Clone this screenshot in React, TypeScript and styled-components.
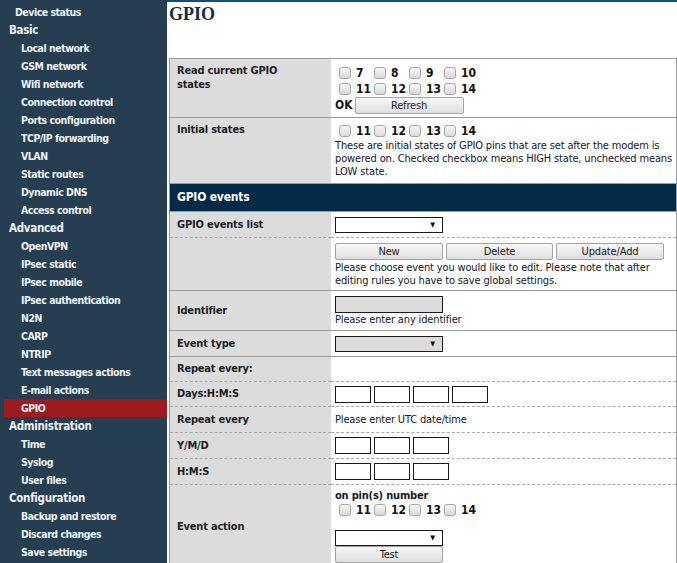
import React from 'react';
import styled, { createGlobalStyle } from 'styled-components';

const UI_FONT = `Tahoma, 'DejaVu Sans Condensed', 'DejaVu Sans', sans-serif`;

const GlobalStyle = createGlobalStyle`
  html, body {
    margin: 0;
    padding: 0;
    background: #ffffff;
    overflow: hidden;
  }
  body {
    font-family: ${UI_FONT};
    font-size: 11px;
    letter-spacing: -0.15px;
    color: #14162a;
  }
  * {
    box-sizing: border-box;
  }
`;

const Page = styled.div`
  display: flex;
  width: 677px;
  height: 563px;
  overflow: hidden;
`;

const Sidebar = styled.nav`
  width: 167px;
  flex-shrink: 0;
  background: #263e51;
  padding-top: 3px;
`;

type NavLevel = 'top' | 'head' | 'item';

const NavItem = styled.div<{ $level: NavLevel; $active?: boolean }>`
  height: 18px;
  line-height: 18px;
  white-space: nowrap;
  font-weight: bold;
  color: #eef3f7;
  font-size: ${(p) => (p.$level === 'head' ? '11.5px' : '10.5px')};
  letter-spacing: ${(p) => (p.$level === 'head' ? '-0.3px' : '-0.5px')};
  padding-left: ${(p) =>
    p.$level === 'head' ? '9px' : p.$level === 'top' ? '15px' : p.$active ? '17px' : '21px'};
  margin-left: ${(p) => (p.$active ? '4px' : '0')};
  background: ${(p) => (p.$active ? '#9d1b1e' : 'transparent')};
`;

const Main = styled.main`
  flex: 1;
  border-top: 2px solid #1d4b72;
  padding: 0 1px 0 2px;
`;

const Title = styled.h1`
  margin: 0;
  height: 56px;
  padding-top: 2px;
  font-family: 'Liberation Serif', 'Times New Roman', serif;
  font-size: 18px;
  line-height: 20px;
  letter-spacing: 0;
  font-weight: bold;
  color: #0f2e4d;
`;

const Table = styled.div`
  border: 1px solid #9b9b9b;
  border-bottom: none;
`;

const Row = styled.div<{ $h: number; $dashed?: boolean; $top?: boolean }>`
  display: grid;
  grid-template-columns: 161px 1fr;
  min-height: ${(p) => p.$h}px;

  & > div {
    border-bottom: 1px ${(p) => (p.$dashed ? 'dashed #a8a8a8' : 'solid #9b9b9b')};
    display: flex;
    flex-direction: column;
    justify-content: ${(p) => (p.$top ? 'flex-start' : 'center')};
  }
`;

const Label = styled.div<{ $middle?: boolean }>`
  background: #dcdcdc;
  padding: 5px 7px 5px;
  font-weight: bold;
  font-size: 11px;
  letter-spacing: -0.2px;
  line-height: 14px;
  color: #1d1d24;
  ${(p) => (p.$middle ? 'justify-content: center !important;' : '')}
`;

const Value = styled.div<{ $pt?: number }>`
  padding: ${(p) => (p.$pt ?? 0)}px 4px 0 4px;
  line-height: 13px;
  white-space: nowrap;
`;

const SectionHeader = styled.div`
  height: 28px;
  background: #032a47;
  color: #ffffff;
  font-weight: bold;
  font-size: 12px;
  letter-spacing: -0.2px;
  line-height: 27px;
  padding-left: 7px;
  border-bottom: 1px solid #9b9b9b;
`;

const Line = styled.div`
  display: flex;
  align-items: center;
  height: 16px;
`;

const Pin = styled.span`
  display: inline-flex;
  align-items: center;
  width: 35px;
  font-weight: bold;
  font-size: 12px;
  letter-spacing: 0;
  color: #111;
`;

const Box = styled.span`
  width: 12px;
  height: 12px;
  margin: 0 5px 0 4px;
  border: 1px solid #a6a6a6;
  border-radius: 3px;
  background: linear-gradient(#f6f6f6, #dadada);
  flex-shrink: 0;
`;

const Btn = styled.div<{ $w?: number }>`
  width: ${(p) => p.$w ?? 108}px;
  height: 17px;
  border: 1px solid #a3a3a3;
  border-radius: 2px;
  background: linear-gradient(#f8f8f8, #dedede);
  color: #1a1a1a;
  font-size: 11px;
  line-height: 15px;
  text-align: center;
  flex-shrink: 0;
`;

const Buttons = styled.div`
  display: flex;
  gap: 3px;
  margin-bottom: 1px;
`;

const Select = styled.div<{ $gray?: boolean }>`
  position: relative;
  width: 108px;
  height: 16px;
  border: 1px solid #1a1a1a;
  background: ${(p) => (p.$gray ? '#dcdcdc' : '#ffffff')};

  &::after {
    content: '▼';
    position: absolute;
    right: 7px;
    top: 2px;
    font-size: 7px;
    line-height: 10px;
    color: #111;
  }
`;

const TextBox = styled.div<{ $w?: number; $gray?: boolean }>`
  width: ${(p) => p.$w ?? 36}px;
  height: 17px;
  border: 1px solid #1a1a1a;
  background: ${(p) => (p.$gray ? '#dcdcdc' : '#ffffff')};
  flex-shrink: 0;
`;

const Fields = styled.div`
  display: flex;
  gap: 3px;
`;

const Ok = styled.span`
  font-weight: bold;
  font-size: 12px;
  letter-spacing: 0;
  margin-right: 2px;
`;

const Bold = styled.div`
  font-weight: bold;
  font-size: 11px;
  letter-spacing: -0.2px;
  line-height: 13px;
`;

const Spacer = styled.div`
  height: 12px;
`;

const nav: { t: string; l: NavLevel; a?: boolean }[] = [
  { t: 'Device status', l: 'top' },
  { t: 'Basic', l: 'head' },
  { t: 'Local network', l: 'item' },
  { t: 'GSM network', l: 'item' },
  { t: 'Wifi network', l: 'item' },
  { t: 'Connection control', l: 'item' },
  { t: 'Ports configuration', l: 'item' },
  { t: 'TCP/IP forwarding', l: 'item' },
  { t: 'VLAN', l: 'item' },
  { t: 'Static routes', l: 'item' },
  { t: 'Dynamic DNS', l: 'item' },
  { t: 'Access control', l: 'item' },
  { t: 'Advanced', l: 'head' },
  { t: 'OpenVPN', l: 'item' },
  { t: 'IPsec static', l: 'item' },
  { t: 'IPsec mobile', l: 'item' },
  { t: 'IPsec authentication', l: 'item' },
  { t: 'N2N', l: 'item' },
  { t: 'CARP', l: 'item' },
  { t: 'NTRIP', l: 'item' },
  { t: 'Text messages actions', l: 'item' },
  { t: 'E-mail actions', l: 'item' },
  { t: 'GPIO', l: 'item', a: true },
  { t: 'Administration', l: 'head' },
  { t: 'Time', l: 'item' },
  { t: 'Syslog', l: 'item' },
  { t: 'User files', l: 'item' },
  { t: 'Configuration', l: 'head' },
  { t: 'Backup and restore', l: 'item' },
  { t: 'Discard changes', l: 'item' },
  { t: 'Save settings', l: 'item' },
];

const Pins = ({ list }: { list: number[] }) => (
  <Line>
    {list.map((n) => (
      <Pin key={n}>
        <Box />
        {n}
      </Pin>
    ))}
  </Line>
);

export default function App() {
  return (
    <Page>
      <GlobalStyle />
      <Sidebar>
        {nav.map((n) => (
          <NavItem key={n.t} $level={n.l} $active={n.a}>
            {n.t}
          </NavItem>
        ))}
      </Sidebar>
      <Main>
        <Title>GPIO</Title>
        <Table>
          <Row $h={59} $top>
            <Label>
              Read current GPIO
              <br />
              states
            </Label>
            <Value $pt={6}>
              <Pins list={[7, 8, 9, 10]} />
              <Pins list={[11, 12, 13, 14]} />
              <Line>
                <Ok>OK</Ok>
                <Btn $w={109}>Refresh</Btn>
              </Line>
            </Value>
          </Row>
          <Row $h={66} $top>
            <Label>Initial states</Label>
            <Value $pt={5}>
              <Pins list={[11, 12, 13, 14]} />
              <div>
                These are initial states of GPIO pins that are set after the modem is
                <br />
                powered on. Checked checkbox means HIGH state, unchecked means
                <br />
                LOW state.
              </div>
            </Value>
          </Row>
          <SectionHeader>GPIO events</SectionHeader>
          <Row $h={26} $dashed>
            <Label>GPIO events list</Label>
            <Value>
              <Select />
            </Value>
          </Row>
          <Row $h={53} $top>
            <Label />
            <Value $pt={5}>
              <Buttons>
                <Btn>New</Btn>
                <Btn $w={107}>Delete</Btn>
                <Btn>Update/Add</Btn>
              </Buttons>
              <div>
                Please choose event you would like to edit. Please note that after
                <br />
                editing rules you have to save global settings.
              </div>
            </Value>
          </Row>
          <Row $h={40}>
            <Label>Identifier</Label>
            <Value>
              <TextBox $w={108} $gray />
              <div>Please enter any identifier</div>
            </Value>
          </Row>
          <Row $h={26}>
            <Label>Event type</Label>
            <Value>
              <Select $gray />
            </Value>
          </Row>
          <Row $h={24} $dashed>
            <Label>Repeat every:</Label>
            <Value />
          </Row>
          <Row $h={25} $dashed>
            <Label>Days:H:M:S</Label>
            <Value>
              <Fields>
                <TextBox />
                <TextBox />
                <TextBox />
                <TextBox />
              </Fields>
            </Value>
          </Row>
          <Row $h={26} $dashed>
            <Label>Repeat every</Label>
            <Value>Please enter UTC date/time</Value>
          </Row>
          <Row $h={26} $dashed>
            <Label>Y/M/D</Label>
            <Value>
              <Fields>
                <TextBox />
                <TextBox />
                <TextBox />
              </Fields>
            </Value>
          </Row>
          <Row $h={26} $dashed>
            <Label>H:M:S</Label>
            <Value>
              <Fields>
                <TextBox />
                <TextBox />
                <TextBox />
              </Fields>
            </Value>
          </Row>
          <Row $h={84} $top>
            <Label $middle>Event action</Label>
            <Value $pt={4}>
              <Bold>on pin(s) number</Bold>
              <Pins list={[11, 12, 13, 14]} />
              <Spacer />
              <Select />
              <Btn>Test</Btn>
            </Value>
          </Row>
        </Table>
      </Main>
    </Page>
  );
}
